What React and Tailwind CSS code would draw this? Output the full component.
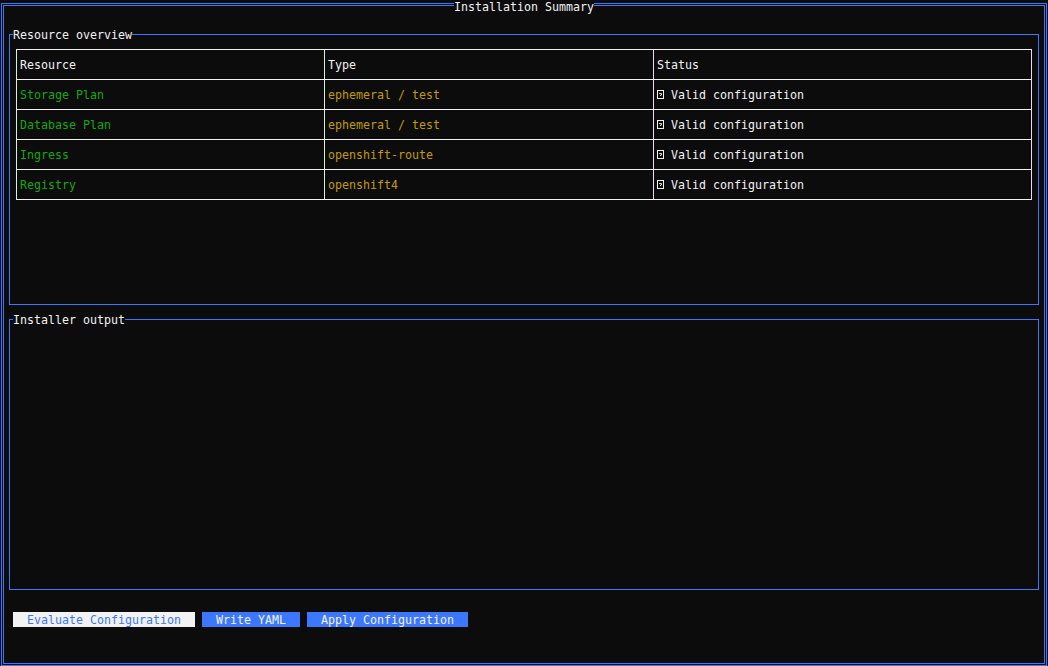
import React from "react";

const rows = [
  ["Storage Plan", "ephemeral / test"],
  ["Database Plan", "ephemeral / test"],
  ["Ingress", "openshift-route"],
  ["Registry", "openshift4"],
];

function Tofu() {
  return (
    <svg width="7" height="9" viewBox="0 0 7 9" className="inline-block mr-[7px] align-[-1px]">
      <rect x="0.5" y="0.5" width="6" height="8" fill="none" stroke="#f2f2f2" strokeWidth="1" />
      <path d="M2 3.5 H4.5 V5 H3.5 V6" fill="none" stroke="#f2f2f2" strokeWidth="0.9" />
    </svg>
  );
}

export default function App() {
  return (
    <div
      className="w-[1048px] h-[666px] bg-[#0c0c0c] pt-[3px] pl-[1px] pr-[1px] text-[#f2f2f2] text-[11.63px] leading-[14px] overflow-hidden"
      style={{ fontFamily: '"DejaVu Sans Mono", "Liberation Mono", monospace' }}
    >
      <div className="relative h-[663px] border-[3px] border-double border-[#3b78ff] flex flex-col">
        <div className="absolute top-[-6px] left-0 right-0 flex justify-center">
          <span className="bg-[#0c0c0c] px-[0.5px] whitespace-pre">Installation Summary</span>
        </div>

        {/* Resource overview */}
        <div className="relative mt-[28px] mx-[5px] h-[271px] border border-[#3b78ff] shrink-0">
          <span className="absolute top-[-7px] left-[3px] bg-[#0c0c0c] whitespace-pre">Resource overview</span>
          <div className="mt-[14px] ml-[6px] w-[1016px] border-b border-r border-b-[#f2f2f2] border-r-[#f0d8f0]">
            <div className="flex h-[30px] border-t border-[#f2f2f2]">
              <div className="w-[308px] border-l border-[#d8f2d8] pl-[3px] flex items-center">Resource</div>
              <div className="w-[329px] border-l border-[#d8f2d8] pl-[3px] flex items-center">Type</div>
              <div className="flex-1 border-l border-[#f0d8f0] pl-[3px] flex items-center">Status</div>
            </div>
            {rows.map(([name, type]) => (
              <div key={name} className="flex h-[30px] border-t border-[#f2f2f2]">
                <div className="w-[308px] border-l border-[#d8f2d8] pl-[3px] flex items-center text-[#16a80f] whitespace-pre">
                  {name}
                </div>
                <div className="w-[329px] border-l border-[#d8f2d8] pl-[3px] flex items-center text-[#c19c00] whitespace-pre">
                  {type}
                </div>
                <div className="flex-1 border-l border-[#f0d8f0] pl-[3px] flex items-center whitespace-pre">
                  <Tofu />
                  Valid configuration
                </div>
              </div>
            ))}
          </div>
        </div>

        {/* Installer output */}
        <div className="relative mt-[14px] mx-[5px] h-[271px] border border-[#3b78ff] shrink-0">
          <span className="absolute top-[-7px] left-[3px] bg-[#0c0c0c] whitespace-pre">Installer output</span>
        </div>

        {/* Buttons */}
        <div className="mt-[22px] ml-[9px] flex gap-[7px]">
          <button className="h-[15px] px-[14px] pt-[1px] leading-[14px] bg-[#f2f2f2] text-[#3b78ff] whitespace-pre">Evaluate Configuration</button>
          <button className="h-[15px] px-[14px] pt-[1px] leading-[14px] bg-[#3b78ff] text-[#f2f2f2] whitespace-pre">Write YAML</button>
          <button className="h-[15px] px-[14px] pt-[1px] leading-[14px] bg-[#3b78ff] text-[#f2f2f2] whitespace-pre">Apply Configuration</button>
        </div>
      </div>
    </div>
  );
}
